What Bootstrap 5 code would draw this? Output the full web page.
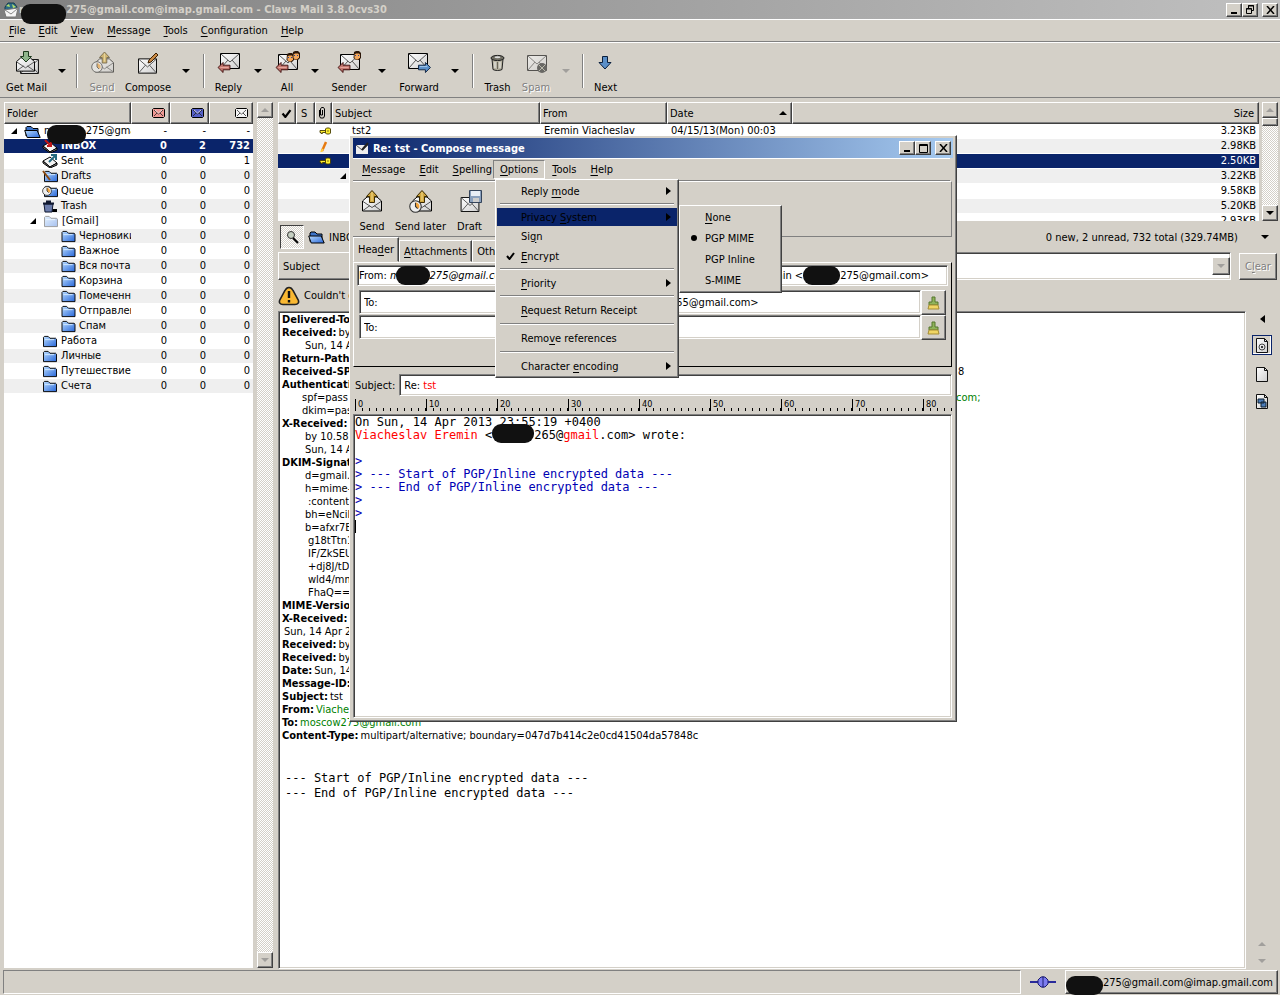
<!DOCTYPE html>
<html lang="en">
<head>
<meta charset="utf-8">
<meta name="viewport" content="width=device-width, initial-scale=1">
<title>Claws Mail</title>
<link href="https://cdn.jsdelivr.net/npm/bootstrap@5.3.0/dist/css/bootstrap.min.css" rel="stylesheet">
<style>
:root{--face:#d4d0c8;--dim:#808080;--dark:#404040;--navy:#0a246a}
body{background:var(--face);color:#000;font:11px/15px "DejaVu Sans Condensed","Noto Sans",sans-serif;height:100vh;overflow:hidden;white-space:nowrap}
button,input,select{font:inherit;color:inherit;border-radius:0}
button{background:none;border:0;padding:0}
svg{display:block;flex:none}
u{text-underline-offset:2px}
.raised{background:var(--face);border:1px solid;border-color:#fff var(--dark) var(--dark) #fff;box-shadow:inset -1px -1px var(--dim)}
.sunken{background:#fff;border:1px solid;border-color:var(--dim) #fff #fff var(--dim);box-shadow:inset 1px 1px var(--dark),inset -1px -1px var(--face)}
.flip{transform:rotate(180deg)}
.hit{color:#f00}
.blob{display:inline-block;flex:none;height:19px;width:39px;margin:-8px 0;vertical-align:middle;background:#111;border-radius:9px;position:relative;z-index:2}
.title-main{height:19px;background:linear-gradient(90deg,#808080,#c0c0c0);color:var(--face);font-weight:bold;padding:0 2px 0 3px}
.title-main .blob{width:45px;height:20px;top:4px;margin-left:-8px}
.winbtn{width:16px;height:14px;display:flex;align-items:center;justify-content:center}
.menu-line{height:23px;border-top:1px solid #fff;border-bottom:1px solid var(--dim)}
.menu-line button{height:19px;padding:0 9px}
.tools{display:grid;align-items:stretch;border-top:1px solid #fff;border-bottom:1px solid var(--dim)}
.tools-main{height:56px;grid-template-columns:53px 17px 14px 36px 56px 20px 16px 33px 26px 32px 24px 44px 22px 52px 20px 16px 33px 44px 16px 18px 27px}
.tool{display:flex;flex-direction:column;align-items:center;justify-content:space-between;padding:7px 0 2px;margin:0 -6px}
.split{width:2px;height:34px;align-self:start;justify-self:center;margin-top:11px;border-left:1px solid var(--dim);border-right:1px solid #fff}
.off{color:var(--dim);text-shadow:1px 1px #fff}
.off svg{opacity:.6}
.arrow{display:flex;justify-content:center;padding-top:26px}
.side{width:277px;padding:4px 0 1px 4px}
.content{padding-left:1px}
table.grid{table-layout:fixed;width:100%;border-collapse:separate;border-spacing:0}
.grid th{height:22px;padding:0 4px 0 2px;font-weight:normal;background:var(--face);border:1px solid;border-color:#fff var(--dark) var(--dark) #fff;box-shadow:inset -1px -1px var(--dim);overflow:hidden}
.grid td{height:15px;padding:0 3px 0 4px;overflow:hidden;line-height:14px;border-bottom:1px solid #fff}
.grid tr.band td{background:#efefef}
.grid tr.picked td{background:var(--navy);color:#fff}
.tree td:not(:first-child){text-align:right}
.grid.tree td:first-child{padding:0;overflow:visible}
.leaf{display:flex;align-items:center;height:14px;gap:3px;overflow-x:clip;overflow-y:visible}
.leaf svg{overflow:visible}
.lv0{padding-left:7px}.lv2{padding-left:38px}.lv2x{padding-left:26px;gap:4px}.lv3{padding-left:57px}
.lv0 .blob{margin:-4px -3px -4px -10px;top:3px}
.bar{width:16px;background:repeating-conic-gradient(#fff 0 25%,var(--face) 0 50%) 0 0/2px 2px}
.bar .raised{height:16px;display:flex;align-items:center;justify-content:center}
.bar .raised.thumb{height:8px}
.list-bar{margin:0 2px 0 3px}
.list{height:119px;overflow:hidden}
.folder-row{padding:4px 0 3px 2px}
.folder-row .total{margin:0 23px 0 auto}
.folder-row .more{margin-right:11px}
.search-row{height:28px;padding:0 3px 0 0}
.kind{width:84px}
.notice{height:31px}
.fold{width:24px;height:24px;background:repeating-conic-gradient(#fff 0 25%,var(--face) 0 50%) 0 0/2px 2px;border:1px solid;border-color:var(--dark) #fff #fff var(--dark)}
.msg{line-height:13px;padding:1px 3px;overflow:hidden}
.msg b{margin-right:2px}
.green{color:#008000}
.i20{padding-left:20px}.i23{padding-left:23px}.i26{padding-left:26px}.i2{padding-left:2px}
.reach{display:inline-block;width:676px;overflow:hidden;vertical-align:top}
.reach.near{width:654px}
.mono{font-family:"DejaVu Sans Mono",monospace;font-size:12px}
.plain{line-height:15px;padding:5px 3px}
.rail{width:34px;padding-right:2px}
.partbtn{width:20px;height:20px;border:1px solid var(--navy);box-shadow:inset -1px -1px #fff}
.rail-end{display:grid;gap:13px;margin-bottom:6px}
.status{height:26px;padding:1px 2px 1px 3px}
.status .blob{width:37px;top:3px}
.statbox{border:1px solid;border-color:var(--dim) #fff #fff var(--dim)}
.compose{position:absolute;left:349px;top:135px;width:608px;height:587px;padding:2px 2px 2px 3px;z-index:5}
.title-sub{height:20px;background:linear-gradient(90deg,var(--navy),#a6caf0);color:#fff;font-weight:bold;margin:0 1px 0 0;padding:0 2px 0 3px}
.compose .menu-line{padding-left:2px}
.compose .menu-line button{padding:0 7px}
.compose .menu-line button.open{margin-left:-6px;padding:0 6px;border:1px solid;border-color:var(--dim) #fff #fff var(--dim)}
.tools-sub{height:56px;grid-template-columns:36px 61px 37px;border-right:1px solid var(--dim);padding-left:1px;margin-right:2px}
.tab{height:22px;padding:0 4px;border:1px solid;border-color:#fff var(--dark) transparent #fff;box-shadow:inset -1px 0 var(--dim)}
.tab.on{height:25px}
.page{border-top:1px solid #fff;border-left:1px solid #fff;border-bottom:1px solid #000;border-right:1px solid #000;height:105px;padding:2px 3px 0 3px;margin:0 2px 0 0}
.from{height:21px;padding:0 18px 0 1px}
.from .blob{width:34px;margin-left:-4px}
.from .blob.wide{width:37px;margin-left:0}
.to{padding:0 2px}
.to.lead-row{padding-top:4px}
.to select{appearance:none;width:164px;height:24px;padding:0 4px;outline:0}
.to input{height:24px;padding:0 3px;outline:0;min-width:0}
.to button{width:25px;height:25px}
.subj{height:22px;padding:0 2px;margin-top:7px}
.ruler{height:15px;margin:0 2px 3px 2px;overflow:hidden;font-size:9px;line-height:10px;display:flex}
.ruler span{flex:0 0 71px;padding-left:2px;border-left:1px solid #000;height:12px;align-self:end;background:linear-gradient(90deg,transparent 6px,#000 6px,#000 7px,transparent 7px) 0 bottom/10% 3px repeat-x}
.body-text{line-height:13px;margin:0 2px 1px 0;padding:1px 1px 0;white-space:pre;overflow:hidden}
.body-text .blob{width:42px;top:-2px}
.quote{color:#0000b4}
.caret{display:inline-block;width:1px;height:13px;background:#000}
.pop{position:absolute;z-index:8;color:#000;text-align:left;list-style:none;margin:0;padding:1px}
.pop li{position:relative}
.pop li>button{display:flex;width:100%;height:20px;align-items:center;padding:0 6px 0 24px}
.pop li.mid>button{height:21px}
.pop li.lit{background:var(--navy)}
.pop li.lit>button{height:18px}
.pop hr{margin:2px 3px 3px 3px;border:0;height:2px;opacity:1;background:linear-gradient(var(--dim) 50%,#fff 50%)}
.options{left:145px;top:43px;width:184px}
.privacy{left:182px;top:-3px;width:103px}
.state{position:absolute;left:9px;top:6px}
.clearbtn{width:38px;height:27px}
</style>
</head>
<body class="d-flex flex-column position-relative">

<svg width="0" height="0" class="position-absolute" aria-hidden="true"><defs>
<linearGradient id="blue" x1="0" y1="0" x2="1" y2="1"><stop offset="0" stop-color="#b9dcff"/><stop offset="1" stop-color="#2766d8"/></linearGradient>
<linearGradient id="paper" x1="0" y1="0" x2="1" y2="1"><stop offset="0" stop-color="#fff"/><stop offset="1" stop-color="#cfcfcf"/></linearGradient>
<symbol id="env" viewBox="0 0 20 16"><path d="M.5.5h19v15H.5z" fill="url(#paper)" stroke="#000"/><path d="M1 1l9 8 9-8M1 15l7-8M19 15l-7-8" fill="none" stroke="#555"/></symbol>
<symbol id="open" viewBox="0 0 20 16"><path d="M.5 5.500L5 1.500h10l4.500 4v10H.5z" fill="url(#paper)" stroke="#000"/><path d="M1 6l9 6 9-6M1 15l7-5M19 15l-7-5" fill="none" stroke="#555"/></symbol>
<symbol id="mini" viewBox="0 0 13 10"><path d="M1.500.5h10l1 1v7l-1 1h-10l-1-1v-7z" fill="currentColor" stroke="#000"/><path d="M2 2l4.500 4L11 2M2 8l3-3M11 8L8 5" fill="none" stroke="#222" stroke-width=".8"/><path d="M3 2l3.500 3L10 2" fill="none" stroke="#fff" stroke-width=".7"/></symbol>
<symbol id="left" viewBox="0 0 14 12"><path d="M.5 6L6 .5v3h7.500v5H6v3z" fill="#c4776f" stroke="#3d0d0d"/><path d="M3 6h9" stroke="#e9aaa2"/></symbol>
<symbol id="right" viewBox="0 0 14 12"><path d="M13.500 6L8 .5v3H.5v5H8v3z" fill="#5b8fc8" stroke="#0a1f3d"/><path d="M2 5h8" stroke="#a9cdf0"/></symbol>
<symbol id="up" viewBox="0 0 12 13"><path d="M6 .5l5.500 6h-3v6h-5v-6h-3z" fill="#cfa53e" stroke="#3a2a00"/><path d="M6 2v9" stroke="#f3dc8c"/></symbol>
<symbol id="pen" viewBox="0 0 12 12"><path d="M1 11l1-3 7-7 2 2-7 7z" fill="#c98a45" stroke="#3c1e00"/></symbol>
<symbol id="face" viewBox="0 0 8 9"><path d="M1 1l2-1h3l2 2v5L6 9H3L.5 7z" fill="#2b1608"/><path d="M1.500 3.500L3 2.500h3l1 1v3L5 8.500H3L1.500 7z" fill="#f4a85c"/><path d="M2 4h1v1H2zM5 4h1v1H5z" fill="#26489a"/></symbol>
<symbol id="dir" viewBox="0 0 15 14"><path d="M.5 2.500l1-1h4l2 2h6l1 1v8H.5z" fill="url(#blue)" stroke="#000"/><path d="M2 5h10" stroke="#d8edff"/></symbol>
<symbol id="opendir" viewBox="0 0 17 13"><path d="M2 11V2.500l1-1h4l2 2h5V11" fill="#3c74c9" stroke="#000"/><path d="M.7 5.500h12.500l3 7h-13z" fill="url(#blue)" stroke="#000"/></symbol>
<symbol id="down" viewBox="0 0 8 4"><path d="M0 0h8L4 4z" fill="currentColor"/></symbol>
<symbol id="tri" viewBox="0 0 5 8"><path d="M0 0l5 4-5 4z" fill="currentColor"/></symbol>
<symbol id="exp" viewBox="0 0 6 6"><path d="M6 0v6H0z" fill="#000"/></symbol>
<symbol id="tick" viewBox="0 0 9 8"><path d="M1 4l2.500 3L8 1" fill="none" stroke="#000" stroke-width="2"/></symbol>
<symbol id="key" viewBox="0 0 12 8"><path d="M6.500 3.500H1v2h1v1h1.500v-1h3" fill="#ffef30" stroke="#463c00" stroke-width=".9"/><path d="M7.500 1h3l1 1v4l-1 1h-3l-1-1V2z" fill="#ffef30" stroke="#463c00" stroke-width=".9"/><path d="M8.500 3.500h1v1h-1z"/></symbol>
<symbol id="tray" viewBox="0 0 16 13"><path d="M1 6l7-4 7 6-7 4z" fill="#f4f4f4" stroke="#000"/><path d="M1 6v2l7 5 7-3V8l-7 4z" fill="#999" stroke="#000"/></symbol>
<symbol id="clock" viewBox="0 0 12 12"><circle cx="6" cy="6" r="5.300" fill="#eee" stroke="#333"/><path d="M6 6V2a4 4 0 0 1 3 6z" fill="#f4a43a"/><path d="M6 2.500V6l2 2" fill="none" stroke="#333"/></symbol>
<symbol id="bin" viewBox="0 0 15 17"><path d="M2 5h11l-1 10.500c-2 1.300-7 1.300-9 0z" fill="#b9b5a4" stroke="#222"/><ellipse cx="7.500" cy="4" rx="6.500" ry="2.600" fill="#6f6d62" stroke="#222"/><ellipse cx="7.500" cy="3.200" rx="3" ry="1" fill="#ddd"/><path d="M5 8v6M10 8v6" stroke="#eee"/><path d="M7.500 8v7" stroke="#6a675c"/></symbol>
<symbol id="brush" viewBox="0 0 13 14"><path d="M5 1h3v5h3v3H2V6h3z" fill="#8fb35a" stroke="#55762c"/><path d="M2 9h9l1 4H1z" fill="#f0d664" stroke="#a58d34"/></symbol>
<symbol id="sheet" viewBox="0 0 12 15"><path d="M.5.5h8l3 3v11H.5z" fill="url(#paper)" stroke="#111"/><path d="M8.500.5v3h3" fill="none" stroke="#111"/></symbol>
</defs></svg>

<header>
  <div class="title-main d-flex align-items-center">
    <svg width="16" height="16" viewBox="0 0 16 16"><path d="M2 5l3-4 6 0 3 4-1 3H2z" fill="#2b6b88" stroke="#173b4c"/><path d="M3 4l3-2 1 3zM9 2l4 3-3 1z" fill="#b8e06a"/><path d="M1 8l14-2-2 9H3z" fill="#f6f6f6" stroke="#777"/><path d="M2 8l6 4 6-5" fill="none" stroke="#888"/></svg>
    <span>m</span><span class="blob"></span><span>275@gmail.com@imap.gmail.com - Claws Mail 3.8.0cvs30</span>
    <div class="ms-auto d-flex">
      <button class="raised winbtn" aria-label="Minimize"><svg width="8" height="8"><path d="M1 6h6v2H1z"/></svg></button>
      <button class="raised winbtn" aria-label="Restore"><svg width="9" height="9" fill="none" stroke="#000"><path d="M2.500 3V.5h5v5H6M2 1h6M.5 3.500h5v5h-5zM0 4h6"/></svg></button>
      <button class="raised winbtn ms-1" aria-label="Close"><svg width="9" height="8"><path d="M1 0l7 8M8 0L1 8" stroke="#000" stroke-width="1.500"/></svg></button>
    </div>
  </div>
  <nav class="menu-line d-flex align-items-center">
    <button><u>F</u>ile</button><button class="ps-1"><u>E</u>dit</button><button class="ps-1"><u>V</u>iew</button><button class="ps-1"><u>M</u>essage</button><button class="ps-1"><u>T</u>ools</button><button class="ps-1"><u>C</u>onfiguration</button><button class="ps-1"><u>H</u>elp</button>
  </nav>
  <div class="tools tools-main">
    <button class="tool"><svg width="26" height="26"><use href="#env" x="6" y="9" width="19" height="15"/><use href="#open" x="2" y="6" width="19" height="16"/><path d="M9.500 1.500h5v5h3L12 12 6.500 6.500h3z" fill="#8fb58b" stroke="#1d3a1d"/></svg>Get Mail</button>
    <button class="arrow" aria-label="Get Mail options"><svg width="8" height="4"><use href="#down"/></svg></button>
    <span class="split"></span>
    <button class="tool off" disabled><svg width="26" height="26"><use href="#open" x="6" y="7" width="19" height="16"/><use href="#up" x="10" y="1" width="11" height="13"/><use href="#clock" x="2" y="11" width="12" height="12"/></svg>Send</button>
    <button class="tool"><svg width="26" height="26"><use href="#env" x="3" y="8" width="19" height="16"/><use href="#pen" x="12" y="2" width="12" height="12"/></svg>Compose</button>
    <button class="arrow" aria-label="Compose options"><svg width="8" height="4"><use href="#down"/></svg></button>
    <span class="split"></span>
    <button class="tool"><svg width="26" height="26"><use href="#env" x="4" y="3" width="20" height="16"/><use href="#left" x="1" y="12" width="14" height="11"/></svg>Reply</button>
    <button class="arrow" aria-label="Reply options"><svg width="8" height="4"><use href="#down"/></svg></button>
    <button class="tool"><svg width="26" height="26"><use href="#env" x="4" y="4" width="20" height="16"/><use href="#left" x="1" y="12" width="14" height="11"/><use href="#face" x="12" y="3" width="8" height="9"/><use href="#face" x="18" y="1" width="8" height="9"/></svg>All</button>
    <button class="arrow" aria-label="All options"><svg width="8" height="4"><use href="#down"/></svg></button>
    <button class="tool"><svg width="26" height="26"><use href="#env" x="4" y="4" width="20" height="16"/><use href="#left" x="1" y="12" width="14" height="11"/><use href="#face" x="17" y="1" width="8" height="9"/></svg>Sender</button>
    <button class="arrow" aria-label="Sender options"><svg width="8" height="4"><use href="#down"/></svg></button>
    <button class="tool"><svg width="26" height="26"><use href="#env" x="2" y="3" width="20" height="16"/><use href="#right" x="12" y="12" width="13" height="11"/></svg>Forward</button>
    <button class="arrow" aria-label="Forward options"><svg width="8" height="4"><use href="#down"/></svg></button>
    <span class="split"></span>
    <button class="tool"><svg width="26" height="26"><use href="#bin" x="5" y="4" width="15" height="17"/></svg>Trash</button>
    <button class="tool off" disabled><svg width="26" height="26"><use href="#env" x="4" y="5" width="20" height="16"/><circle cx="19" cy="18" r="5" fill="#222"/><path d="M16 15l6 6M22 15l-6 6" stroke="#aa9"/></svg>Spam</button>
    <button class="arrow off" aria-label="Spam options" disabled><svg width="8" height="4"><use href="#down"/></svg></button>
    <span class="split"></span>
    <button class="tool"><svg width="26" height="26"><path d="M9.500 6.500h5v6h3.500L12 19l-6-6.500h3.500z" fill="#5b8fc8" stroke="#0a1f3d"/></svg>Next</button>
  </div>
</header>

<main class="flex-grow-1 d-flex overflow-hidden">
  <aside class="side d-flex flex-shrink-0">
    <div class="bg-white flex-grow-1 overflow-hidden">
      <table class="grid tree">
        <colgroup><col style="width:127px"><col style="width:39px"><col style="width:39px"><col style="width:44px"></colgroup>
        <thead><tr><th>Folder</th>
          <th aria-label="New"><svg class="ms-auto" width="13" height="10" color="#f09a94"><use href="#mini"/></svg></th>
          <th aria-label="Unread"><svg class="ms-auto" width="13" height="10" color="#5560c8"><use href="#mini"/></svg></th>
          <th aria-label="Total"><svg class="ms-auto" width="13" height="10" color="#f4f4f4"><use href="#mini"/></svg></th></tr></thead>
        <tbody>
        <tr><td><div class="leaf lv0"><svg width="6" height="6" class="me-1"><use href="#exp"/></svg><svg width="17" height="13"><use href="#opendir"/></svg>m<span class="blob"></span><span>275@gmai</span></div></td><td>-</td><td>-</td><td>-</td></tr>
        <tr class="picked fw-bold"><td><div class="leaf lv2"><svg width="16" height="13"><use href="#tray"/><path d="M3 0l6 6M9 2v4H5" stroke="#c01818" stroke-width="2" fill="none"/></svg>INBOX</div></td><td>0</td><td>2</td><td>732</td></tr>
        <tr><td><div class="leaf lv2"><svg width="16" height="13"><use href="#tray"/><path d="M7 7l7-7M9 0h5v5" stroke="#236a80" stroke-width="2" fill="none"/></svg>Sent</div></td><td>0</td><td>0</td><td>1</td></tr>
        <tr class="band"><td><div class="leaf lv2"><svg width="16" height="13"><use href="#dir" x="2" y="0" width="14" height="13"/><path d="M1 1l7 9" stroke="#8a4a12" stroke-width="2"/></svg>Drafts</div></td><td>0</td><td>0</td><td>0</td></tr>
        <tr><td><div class="leaf lv2"><svg width="16" height="13"><use href="#dir" x="2" y="0" width="14" height="13"/><use href="#clock" x="0" y="1" width="10" height="10"/></svg>Queue</div></td><td>0</td><td>0</td><td>0</td></tr>
        <tr class="band"><td><div class="leaf lv2"><svg width="16" height="13"><path d="M9 9h6v3H8z"/><path d="M2 4h9l-1 8H3z" fill="#6b7cab" stroke="#101830"/><path d="M1 3.500h11M4 1.500h5" stroke="#101830" stroke-width="2"/></svg>Trash</div></td><td>0</td><td>0</td><td>0</td></tr>
        <tr><td><div class="leaf lv2x"><svg width="6" height="6" class="me-1"><use href="#exp"/></svg><svg width="14" height="13" opacity=".4"><use href="#dir"/></svg>[Gmail]</div></td><td>0</td><td>0</td><td>0</td></tr>
        <tr class="band"><td><div class="leaf lv3"><svg width="15" height="13"><use href="#dir"/></svg>Черновики</div></td><td>0</td><td>0</td><td>0</td></tr>
        <tr><td><div class="leaf lv3"><svg width="15" height="13"><use href="#dir"/></svg>Важное</div></td><td>0</td><td>0</td><td>0</td></tr>
        <tr class="band"><td><div class="leaf lv3"><svg width="15" height="13"><use href="#dir"/></svg>Вся почта</div></td><td>0</td><td>0</td><td>0</td></tr>
        <tr><td><div class="leaf lv3"><svg width="15" height="13"><use href="#dir"/></svg>Корзина</div></td><td>0</td><td>0</td><td>0</td></tr>
        <tr class="band"><td><div class="leaf lv3"><svg width="15" height="13"><use href="#dir"/></svg>Помеченны</div></td><td>0</td><td>0</td><td>0</td></tr>
        <tr><td><div class="leaf lv3"><svg width="15" height="13"><use href="#dir"/></svg>Отправлен</div></td><td>0</td><td>0</td><td>0</td></tr>
        <tr class="band"><td><div class="leaf lv3"><svg width="15" height="13"><use href="#dir"/></svg>Спам</div></td><td>0</td><td>0</td><td>0</td></tr>
        <tr><td><div class="leaf lv2"><svg width="16" height="13"><use href="#dir"/></svg>Работа</div></td><td>0</td><td>0</td><td>0</td></tr>
        <tr class="band"><td><div class="leaf lv2"><svg width="16" height="13"><use href="#dir"/></svg>Личные</div></td><td>0</td><td>0</td><td>0</td></tr>
        <tr><td><div class="leaf lv2"><svg width="16" height="13"><use href="#dir"/></svg>Путешествие</div></td><td>0</td><td>0</td><td>0</td></tr>
        <tr class="band"><td><div class="leaf lv2"><svg width="16" height="13"><use href="#dir"/></svg>Счета</div></td><td>0</td><td>0</td><td>0</td></tr>
        </tbody>
      </table>
    </div>
    <div class="bar d-flex flex-column justify-content-between flex-shrink-0 mx-1">
      <div class="raised off"><svg class="flip" width="8" height="4"><use href="#down"/></svg></div>
      <div class="raised off"><svg width="8" height="4"><use href="#down"/></svg></div>
    </div>
  </aside>

  <section class="content flex-grow-1 d-flex flex-column overflow-hidden">
    <div class="d-flex pt-1 flex-shrink-0">
      <div class="list bg-white flex-grow-1">
        <table class="grid">
          <colgroup><col style="width:18px"><col style="width:19px"><col style="width:17px"><col style="width:208px"><col style="width:127px"><col style="width:125px"><col></colgroup>
          <thead><tr><th aria-label="Mark"><svg width="11" height="9"><use href="#tick"/></svg></th><th class="ps-1">S</th><th aria-label="Attachment"><svg width="8" height="12" fill="none" stroke="#000"><path d="M1.500 3v6l1 2h3l1-2V2L5.500.5h-2L2.500 2v6h2V3"/></svg></th><th>Subject</th><th>From</th><th><span class="d-flex justify-content-between align-items-center">Date<svg class="flip" width="8" height="4"><use href="#down"/></svg></span></th><th class="text-end">Size</th></tr></thead>
          <tbody>
          <tr><td></td><td></td><td><svg width="12" height="8"><use href="#key"/></svg></td><td class="ps-3"><span class="ps-1">tst2</span></td><td>Eremin Viacheslav</td><td>04/15/13(Mon) 00:03</td><td class="text-end">3.23KB</td></tr>
          <tr class="band"><td></td><td></td><td><svg width="10" height="11"><path d="M3 10l4-9" stroke="#e67a10" stroke-width="2.500"/><path d="M2 11l2-3" stroke="#ffd040" stroke-width="2"/></svg></td><td></td><td></td><td></td><td class="text-end">2.98KB</td></tr>
          <tr class="picked"><td></td><td></td><td><svg width="12" height="8"><use href="#key"/></svg></td><td></td><td></td><td></td><td class="text-end">2.50KB</td></tr>
          <tr class="band"><td></td><td></td><td></td><td><svg width="6" height="6" class="ms-1"><use href="#exp"/></svg></td><td></td><td></td><td class="text-end">3.22KB</td></tr>
          <tr><td></td><td></td><td></td><td></td><td></td><td></td><td class="text-end">9.58KB</td></tr>
          <tr class="band"><td></td><td></td><td></td><td></td><td></td><td></td><td class="text-end">5.20KB</td></tr>
          <tr><td></td><td></td><td></td><td></td><td></td><td></td><td class="text-end">2.93KB</td></tr>
          </tbody>
        </table>
      </div>
      <div class="bar list-bar d-flex flex-column flex-shrink-0">
        <div class="raised off"><svg class="flip" width="8" height="4"><use href="#down"/></svg></div>
        <div class="raised thumb"></div>
        <div class="raised mt-auto"><svg width="8" height="4"><use href="#down"/></svg></div>
      </div>
    </div>
    <div class="folder-row d-flex align-items-center flex-shrink-0">
      <button class="fold d-flex align-items-center justify-content-center" aria-label="Quick search"><svg width="13" height="14"><circle cx="5" cy="5" r="3.500" fill="#c6d0c2" stroke="#333"/><path d="M7 8l5 5" stroke="#000" stroke-width="2"/></svg></button>
      <svg class="mx-1" width="17" height="14"><use href="#opendir"/></svg><span>INBOX</span>
      <span class="total">0 new, 2 unread, 732 total (329.74MB)</span>
      <svg class="more" width="8" height="4"><use href="#down"/></svg>
    </div>
    <div class="search-row d-flex align-items-center flex-shrink-0">
      <button class="kind raised h-100 px-1 text-start">Subject</button>
      <label class="visually-hidden" for="q">Search</label>
      <div class="sunken d-flex flex-grow-1 me-2 p-1 h-100 align-items-center justify-content-end pe-0">
        <input id="q" class="border-0 flex-grow-1 bg-transparent p-0">
        <button class="raised off d-flex align-items-center justify-content-center h-100 px-1" aria-label="Search history"><svg width="8" height="4"><use href="#down"/></svg></button>
      </div>
      <button class="raised off clearbtn" disabled>C<u>l</u>ear</button>
    </div>
    <div class="notice d-flex align-items-center flex-shrink-0 gap-1">
      <svg width="22" height="20" viewBox="0 0 22 20"><path d="M11 1.500c2 0 3 1 4 3l5 9c1.500 3 0 5-3 5H5c-3 0-4.500-2-3-5l5-9c1-2 2-3 4-3z" fill="#f9b832" stroke="#222" stroke-width="1.600"/><path d="M11 5v7M11 14v2.500" stroke="#111" stroke-width="2.400"/></svg>
      <span>Couldn't decrypt</span>
    </div>
    <div class="d-flex flex-grow-1 overflow-hidden">
      <article class="msg sunken flex-grow-1">
        <div><b>Delivered-To:</b></div>
        <div><b>Received:</b>by 10.58</div>
        <div class="i23">Sun, 14 Apr 2</div>
        <div><b>Return-Path:</b></div>
        <div><span class="reach"><b>Received-SPF:</b></span>8</div>
        <div><b>Authentication</b></div>
        <div class="i20"><span class="reach near">spf=pass (g</span><span class="green">com;</span></div>
        <div class="i20">dkim=pass</div>
        <div><b>X-Received:</b></div>
        <div class="i23">by 10.58.1</div>
        <div class="i23">Sun, 14 Apr</div>
        <div><b>DKIM-Signature</b></div>
        <div class="i23">d=gmail.com</div>
        <div class="i23">h=mime-ver</div>
        <div class="i26">:content-t</div>
        <div class="i23">bh=eNciID</div>
        <div class="i23">b=afxr7BA</div>
        <div class="i26">g18tTtn1</div>
        <div class="i26">IF/ZkSEU</div>
        <div class="i26">+dj8J/tD</div>
        <div class="i26">wld4/mm</div>
        <div class="i26">FhaQ==</div>
        <div><b>MIME-Version</b></div>
        <div><b>X-Received:</b></div>
        <div class="i2">Sun, 14 Apr 2</div>
        <div><b>Received:</b>by 1</div>
        <div><b>Received:</b>by 1</div>
        <div><b>Date:</b>Sun, 14</div>
        <div><b>Message-ID:</b></div>
        <div><b>Subject:</b>tst</div>
        <div><b>From:</b><span class="green">Viacheslav</span></div>
        <div><b>To:</b><span class="green">moscow275@gmail.com</span></div>
        <div><b>Content-Type:</b>multipart/alternative; boundary=047d7b414c2e0cd41504da57848c</div>
        <div class="mono plain mt-4">--- Start of PGP/Inline encrypted data ---<br>--- End of PGP/Inline encrypted data ---</div>
      </article>
      <div class="rail d-flex flex-column align-items-center flex-shrink-0">
        <svg class="my-1 flip" width="5" height="8"><use href="#tri"/></svg>
        <button class="partbtn mt-2 d-flex align-items-center justify-content-center" aria-label="Headers"><svg width="12" height="15"><use href="#sheet"/><circle cx="6" cy="9" r="3" fill="none" stroke="#444"/><circle cx="6" cy="9" r="1"/></svg></button>
        <button class="mt-2 pt-1" aria-label="Text part"><svg width="12" height="15"><use href="#sheet"/></svg></button>
        <button class="mt-2 pt-1" aria-label="HTML part"><svg width="12" height="15"><use href="#sheet"/><path d="M2 5h6v4H2zM5 8h5v5H5z" fill="#4a7bb8" stroke="#123"/></svg></button>
        <div class="rail-end mt-auto off">
          <svg class="flip" width="8" height="4"><use href="#down"/></svg>
          <svg width="8" height="4"><use href="#down"/></svg>
        </div>
      </div>
    </div>
  </section>
</main>

<footer class="status d-flex align-items-center">
  <div class="statbox flex-grow-1 h-100"></div>
  <svg class="mx-2" width="28" height="12"><path d="M1 6h26" stroke="#2a2a9a" stroke-width="2"/><path d="M9 4l3-3h4l3 3v4l-3 3h-4L9 8z" fill="#7c7cf0" stroke="#1c1c70"/><path d="M14 0v12" stroke="#1c1c70"/></svg>
  <button class="raised h-100 px-0 pe-1 d-flex align-items-center"><span class="blob"></span>275@gmail.com@imap.gmail.com</button>
</footer>

<section class="compose raised d-flex flex-column" aria-label="Compose message">
  <div class="title-sub d-flex align-items-center flex-shrink-0">
    <svg width="13" height="13" class="me-1"><path d="M0 3h12v9H0z" fill="#eee"/><path d="M0 3l6 5 6-5" fill="none" stroke="#555"/><path d="M6 8l6-7" stroke="#222" stroke-width="2"/></svg>Re: tst - Compose message
    <div class="ms-auto d-flex text-dark">
      <button class="raised winbtn" aria-label="Minimize"><svg width="8" height="8"><path d="M1 6h6v2H1z"/></svg></button>
      <button class="raised winbtn" aria-label="Maximize"><svg width="9" height="9" fill="none" stroke="#000"><path d="M.5.5h8v8h-8zM0 1.500h9"/></svg></button>
      <button class="raised winbtn ms-1" aria-label="Close"><svg width="9" height="8"><path d="M1 0l7 8M8 0L1 8" stroke="#000" stroke-width="1.500"/></svg></button>
    </div>
  </div>
  <nav class="menu-line d-flex align-items-center flex-shrink-0 me-1">
    <button><u>M</u>essage</button><button><u>E</u>dit</button><button><u>S</u>pelling</button><button class="open"><u>O</u>ptions</button><button><u>T</u>ools</button><button><u>H</u>elp</button>
  </nav>
  <div class="tools tools-sub flex-shrink-0">
    <button class="tool"><svg width="26" height="26"><use href="#open" x="3" y="6" width="20" height="17"/><use href="#up" x="7" y="1" width="12" height="13"/></svg>Send</button>
    <button class="tool"><svg width="26" height="26"><use href="#open" x="4" y="6" width="20" height="17"/><use href="#up" x="8" y="1" width="12" height="13"/><use href="#clock" x="1" y="11" width="13" height="13"/></svg>Send later</button>
    <button class="tool"><svg width="26" height="26"><use href="#env" x="3" y="8" width="20" height="15"/><path d="M12.500 1.500h12v12h-12z" fill="#8aa0bd" stroke="#33435a"/><path d="M14 2h9v5h-9z" fill="#e8eef6"/><path d="M16 9h6v4h-6z" fill="#ccc"/></svg>Draft</button>
  </div>
  <div class="d-flex align-items-end flex-shrink-0">
    <button class="tab on">Hea<u>d</u>er</button><button class="tab"><u>A</u>ttachments</button><button class="tab">Othe<u>r</u>s</button>
  </div>
  <div class="page flex-shrink-0">
    <div class="from sunken d-flex align-items-center"><span>From:&nbsp;</span><i>m</i><span class="blob"></span><i>275@gmail.com</i><span class="ms-auto">Viacheslav Eremin &lt;</span><span class="blob wide"></span><span>275@gmail.com&gt;</span></div>
    <div class="to lead-row d-flex">
      <select class="sunken" aria-label="Recipient type"><option>To:</option></select><input class="sunken flex-grow-1" aria-label="Recipient" value="Viacheslav Eremin &lt;moscow265@gmail.com&gt;"><button class="raised d-flex align-items-center justify-content-center" aria-label="Clear recipient"><svg width="13" height="14"><use href="#brush"/></svg></button>
    </div>
    <div class="to d-flex">
      <select class="sunken" aria-label="Recipient type"><option>To:</option></select><input class="sunken flex-grow-1" aria-label="Recipient"><button class="raised d-flex align-items-center justify-content-center" aria-label="Clear recipient"><svg width="13" height="14"><use href="#brush"/></svg></button>
    </div>
  </div>
  <div class="subj d-flex align-items-center flex-shrink-0">
    <span>Subject:</span>
    <div class="sunken flex-grow-1 ms-1 px-1 h-100 d-flex align-items-center" role="textbox" contenteditable="true" aria-label="Subject">Re:&nbsp;<span class="hit">tst</span></div>
  </div>
  <div class="ruler flex-shrink-0"><span>0</span><span>10</span><span>20</span><span>30</span><span>40</span><span>50</span><span>60</span><span>70</span><span>80</span></div>
  <div class="body-text mono sunken flex-grow-1" role="textbox" aria-label="Message body" contenteditable="true">On Sun, 14 Apr 2013 23:55:19 +0400
<span class="hit">Viacheslav Eremin</span> &lt;<span class="blob"></span>265@<span class="hit">gmail</span>.com&gt; wrote:

<span class="quote">&gt;
&gt; --- Start of PGP/Inline encrypted data ---
&gt; --- End of PGP/Inline encrypted data ---
&gt;
&gt;</span>
<span class="caret"></span></div>

  <ul class="pop options raised">
    <li><button><span>Reply <u>m</u>ode</span><svg class="ms-auto" width="5" height="8"><use href="#tri"/></svg></button></li>
    <li role="separator"><hr></li>
    <li class="lit"><button><span>Privacy <u>S</u>ystem</span><svg class="ms-auto" width="5" height="8"><use href="#tri"/></svg></button>
      <ul class="pop privacy raised">
        <li class="mid"><button><u>N</u>one</button></li>
        <li class="mid"><svg class="state" width="9" height="9"><circle cx="4" cy="4" r="3"/></svg><button>PGP MIME</button></li>
        <li class="mid"><button>PGP Inline</button></li>
        <li class="mid"><button>S-MIME</button></li>
      </ul>
    </li>
    <li><button>Si<u>g</u>n</button></li>
    <li><svg class="state" width="9" height="8"><use href="#tick"/></svg><button><u>E</u>ncrypt</button></li>
    <li role="separator"><hr></li>
    <li><button><u>P</u>riority<svg class="ms-auto" width="5" height="8"><use href="#tri"/></svg></button></li>
    <li role="separator"><hr></li>
    <li class="mid"><button><span><u>R</u>equest Return Receipt</span></button></li>
    <li role="separator"><hr></li>
    <li class="mid"><button><span>Remo<u>v</u>e references</span></button></li>
    <li role="separator"><hr></li>
    <li><button><span>Character <u>e</u>ncoding</span><svg class="ms-auto" width="5" height="8"><use href="#tri"/></svg></button></li>
  </ul>
</section>
<script src="https://cdn.jsdelivr.net/npm/bootstrap@5.3.0/dist/js/bootstrap.bundle.min.js"></script>
</body>
</html>
